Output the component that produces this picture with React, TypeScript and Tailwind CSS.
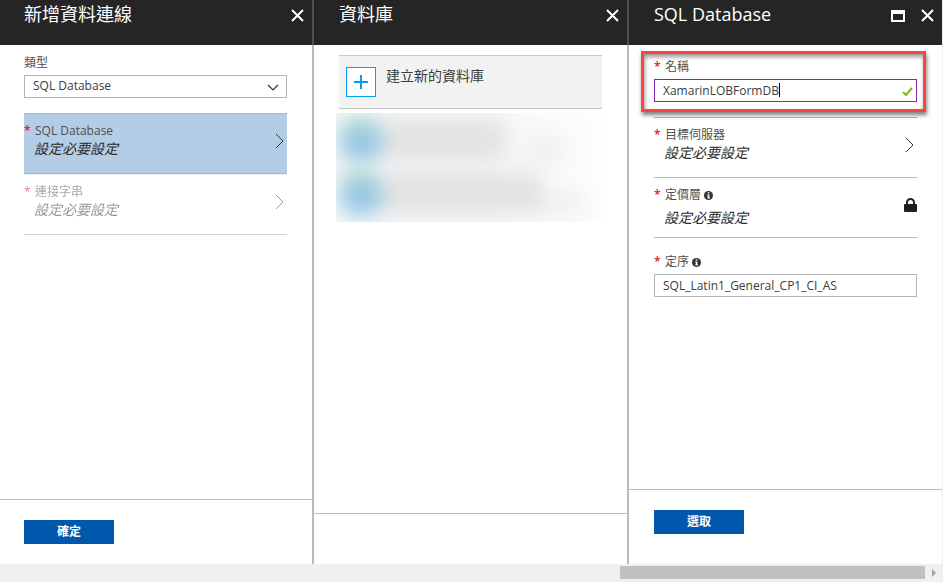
import React from "react";

function CloseIcon() {
  return (
    <svg width="13" height="13" viewBox="0 0 13 13" fill="none" stroke="#ffffff" strokeWidth="2">
      <path d="M1 1 12 12M12 1 1 12" />
    </svg>
  );
}

function MaximizeIcon() {
  return (
    <svg width="14" height="12" viewBox="0 0 14 12" fill="none" stroke="#ffffff">
      <path d="M1 0v12M13 0v12M0 11h14" strokeWidth="2" />
      <path d="M0 2h14" strokeWidth="4" />
    </svg>
  );
}

function ChevronRight() {
  return (
    <svg width="9" height="16" viewBox="0 0 9 16" fill="none" stroke="#333333" strokeWidth="1">
      <path d="M1 1 8 8 1 15" />
    </svg>
  );
}

function InfoIcon() {
  return (
    <svg width="9" height="9" viewBox="0 0 9 9" role="img" aria-label="資訊">
      <circle cx="4.5" cy="4.5" r="4.5" fill="#333333" />
      <path d="M3.7 1.2h1.7v1.4H3.7zM3.2 3.4h2.2v3.2h.6v1H3.2v-1h.6V4.4h-.6z" fill="#ffffff" />
    </svg>
  );
}

function LockIcon() {
  return (
    <svg width="13" height="14" viewBox="0 0 13 14">
      <rect x="0" y="6" width="13" height="8" rx="1" fill="#1f1f1f" />
      <path d="M3 7V4.5a3.5 3.5 0 0 1 7 0V7" fill="none" stroke="#1f1f1f" strokeWidth="2" />
    </svg>
  );
}

type BladeProps = {
  title: string;
  children: React.ReactNode;
  footer?: React.ReactNode;
  footerClass: string;
  edge: string;
  headerEdge: string;
  pad: string;
  maximize?: boolean;
};

function Blade({ title, children, footer, footerClass, edge, headerEdge, pad, maximize }: BladeProps) {
  return (
    <section className="flex min-w-0 flex-col">
      <header className={`flex h-[45px] shrink-0 items-start justify-between bg-[#252525] text-white ${pad} ${headerEdge}`}>
        <h2 className="pt-[2px] text-lg leading-6">{title}</h2>
        <div className="flex items-center gap-4 pt-[9px]">
          {maximize && (
            <button type="button" aria-label="最大化">
              <MaximizeIcon />
            </button>
          )}
          <button type="button" aria-label="關閉">
            <CloseIcon />
          </button>
        </div>
      </header>
      <div className={`flex flex-1 flex-col ${edge}`}>
        <div className={`flex-1 pr-[25px] ${pad}`}>{children}</div>
        <footer className={`border-t border-[#bababa] pt-5 ${pad} ${footerClass}`}>{footer}</footer>
      </div>
    </section>
  );
}

function PrimaryButton({ children }: { children: React.ReactNode }) {
  return (
    <button type="button" className="flex h-6 w-[90px] items-center justify-center bg-[#0058ad] text-xs font-bold text-white">
      {children}
    </button>
  );
}

function Star() {
  return <span className="w-[11px] shrink-0 font-semibold text-[#e81123]">*</span>;
}

type PickerProps = { label: string; className: string; icon: React.ReactNode; info?: boolean };

function Picker({ label, className, icon, info }: PickerProps) {
  return (
    <button type="button" className={`flex w-full justify-between border-b text-left ${className}`}>
      <span className="block pt-2">
        <span className="flex items-center text-xs leading-[18px] text-[#505050]">
          <Star />
          {label}
          {info && <span className="pl-[3px]"><InfoIcon /></span>}
        </span>
        <span className={`block pl-[10px] text-sm leading-[18px] text-[#2a2a2a] italic ${info ? "pt-[5px]" : ""}`}>設定必要設定</span>
      </span>
      <span className="self-center pb-[5px]">{icon}</span>
    </button>
  );
}

function BlurredRow({ wide }: { wide?: boolean }) {
  return (
    <div className="flex h-[53px] items-center pl-1 blur-[10px]">
      <div className="h-[50px] w-[42px] rounded-full bg-linear-to-b from-[#b9dfca] via-[#8fc3e2] to-[#a9d0ee]" />
      <div className={`h-10 bg-[#e2e2e2] ${wide ? "w-[160px]" : "w-[124px]"}`} />
      <div className={`mt-5 h-5 w-10 bg-[#eeeeee] ${wide ? "" : "ml-5"}`} />
    </div>
  );
}

export default function App() {
  return (
    <div className="flex h-screen flex-col bg-white font-['Open_Sans','Noto_Sans_CJK_TC',sans-serif] text-xs">
      <main className="grid flex-1 grid-cols-[314fr_315fr_314fr]">
        <Blade
          title="新增資料連線"
          pad="pl-6"
          edge="border-r-2 border-[#bababa]"
          headerEdge="border-r-2 border-[#505050] pr-2"
          footerClass="h-[65px]"
          footer={<PrimaryButton>確定</PrimaryButton>}
        >
          <label htmlFor="type" className="block pt-[9px] leading-[18px] text-[#505050]">類型</label>
          <div className="relative mt-[3px]">
            <select id="type" className="block h-[23px] w-full appearance-none border border-[#b5b5b5] bg-white pr-6 pb-px pl-2 text-xs text-[#3c3c3c]">
              <option>SQL Database</option>
            </select>
            <svg className="pointer-events-none absolute top-[9px] right-2" width="12" height="8" viewBox="0 0 12 8" fill="none" stroke="#333333" strokeWidth="1.2">
              <path d="M1 1 6 6 11 1" />
            </svg>
          </div>
          <Picker label="SQL Database" icon={<ChevronRight />} className="mt-[15px] h-[61px] border-t border-[#b5b5b5] bg-[#b3cde7] pr-[3px]" />
          <Picker label="連接字串" icon={<ChevronRight />} className="h-[61px] border-t border-t-[#e0e0e0] border-b-[#a8a8a8] pr-[3px] opacity-50" />
        </Blade>

        <Blade
          title="資料庫"
          pad="pl-[25px]"
          edge="border-r-2 border-[#bababa]"
          headerEdge="border-r-2 border-[#505050] pr-2"
          footerClass="h-[51px]"
        >
          <button type="button" className="mt-[10px] flex h-[54px] w-full items-start border-y border-[#c8c8c8] bg-[#f2f2f2] pt-[11px] pl-[7px] text-left">
            <svg width="30" height="30" viewBox="0 0 30 30" fill="none" stroke="#00a1f1">
              <rect x=".5" y=".5" width="29" height="29" fill="#ffffff" />
              <path d="M8 15h14M15 8v14" strokeWidth="2" />
            </svg>
            <span className="pl-[10px] text-sm leading-[18px] text-[#3c3c3c]">建立新的資料庫</span>
          </button>
          <div className="mt-1 -ml-[3px] h-[109px] overflow-hidden bg-linear-to-r from-[#f4f7f8] via-[#f6f6f6] to-[#fdfdfd]" aria-hidden="true">
            <BlurredRow />
            <BlurredRow wide />
          </div>
        </Blade>

        <Blade
          title="SQL Database"
          pad="pl-[25px]"
          edge="border-r border-[#e6f2fb]"
          headerEdge="border-r border-[#e6f2fb] pr-2"
          footerClass="h-[75px]"
          footer={<PrimaryButton>選取</PrimaryButton>}
          maximize
        >
          <div className="relative border-b border-[#b0b0b0] pt-[13px] pb-[15px]">
            <label htmlFor="name" className="flex leading-[18px] text-[#505050]">
              <Star />名稱
            </label>
            <div className="relative mt-[3px]">
              <input id="name" defaultValue="XamarinLOBFormDB" className="block h-[23px] w-full border border-[#8226a6] bg-white pr-6 pb-px pl-2 text-xs text-[#3c3c3c]" />
              <span className="absolute top-1 left-[125px] h-[14px] w-px bg-black" />
              <svg className="absolute top-2 right-1" width="11" height="9" viewBox="0 0 11 9" fill="none" stroke="#7fba00" strokeWidth="2">
                <path d="M1 5 4 8 10 1" />
              </svg>
            </div>
            <div className="pointer-events-none absolute top-[6px] -right-[9px] bottom-[5px] -left-[13px] border-3 border-[#ff4141] shadow-[1px_3px_4px_rgba(0,0,0,0.5),inset_1px_3px_4px_rgba(0,0,0,0.4)]" />
          </div>
          <Picker label="目標伺服器" icon={<ChevronRight />} className="h-[60px] border-[#bababa] pr-[3px]" />
          <Picker label="定價層" info icon={<LockIcon />} className="h-[60px] border-[#bababa]" />
          <label htmlFor="collation" className="mt-[15px] flex items-center leading-[18px] text-[#505050]">
            <Star />定序<span className="pl-[3px]"><InfoIcon /></span>
          </label>
          <input id="collation" defaultValue="SQL_Latin1_General_CP1_CI_AS" className="mt-[3px] block h-[23px] w-full border border-[#b5b5b5] bg-white px-2 pb-px text-xs text-[#3c3c3c]" />
        </Blade>
      </main>

      <div className="flex h-[18px] shrink-0 items-center justify-end border-b border-[#e6f2fb] bg-[#f0f0f0] pr-[6px]" aria-hidden="true">
        <div className="h-[13px] w-[32.5%] bg-[#c1c1c1]" />
        <svg className="ml-[7px]" width="5" height="8" viewBox="0 0 5 8">
          <path d="M0 0 4 4 0 8z" fill="#a0a0a0" />
        </svg>
      </div>
    </div>
  );
}
